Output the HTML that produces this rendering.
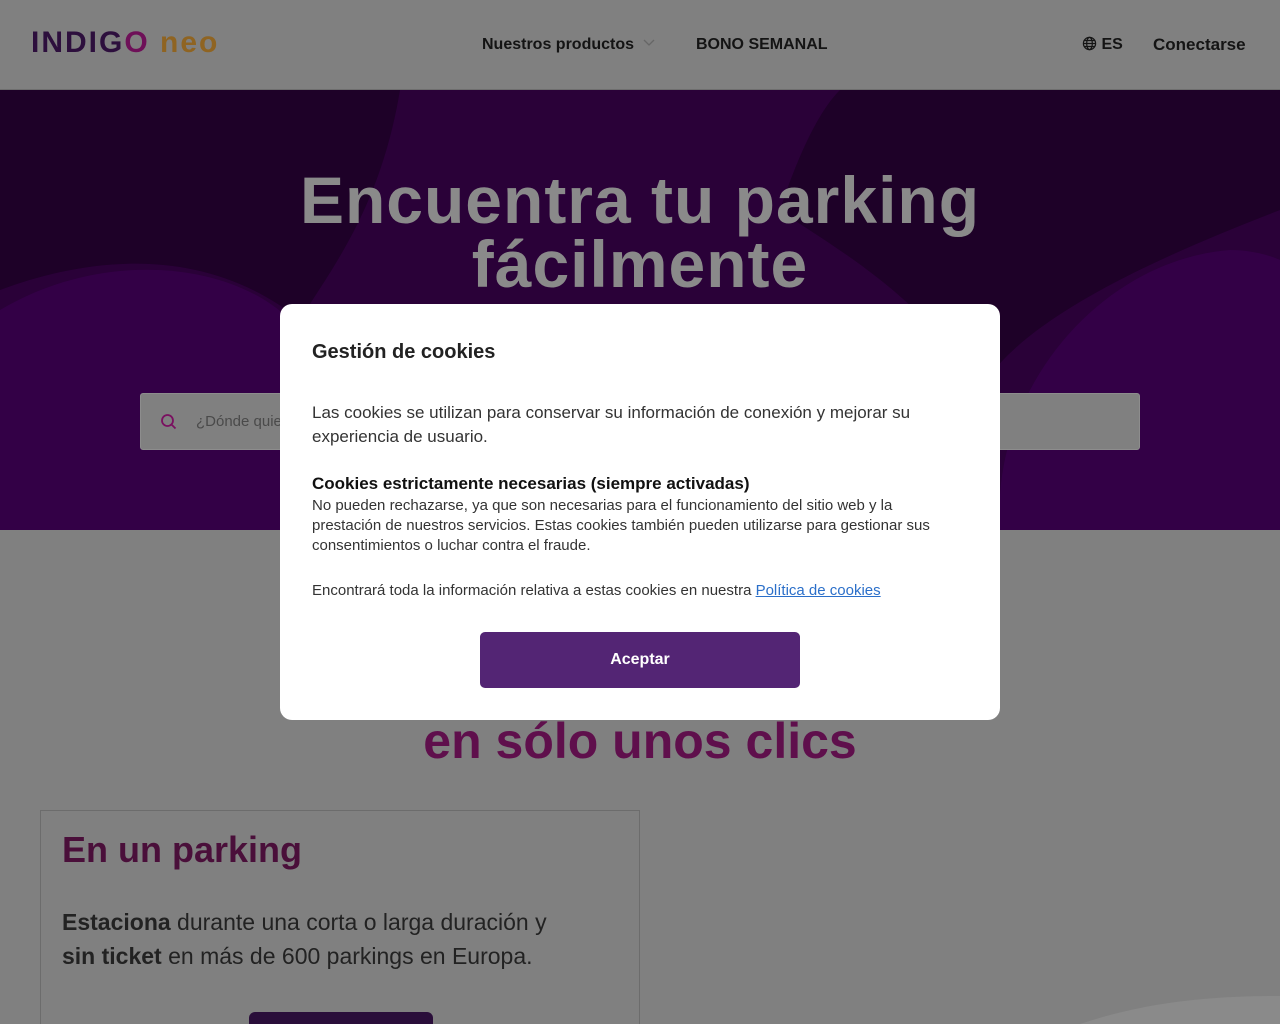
<!DOCTYPE html>
<html><head><meta charset="utf-8"><style>
*{box-sizing:border-box;margin:0;padding:0}
html,body{width:1280px;height:1024px;overflow:hidden}
body{background:#808080;font-family:"Liberation Sans",sans-serif;position:relative}
.hdr{height:90px;background:#808080;border-bottom:1px solid #6e6e6e;position:relative}
.logo{position:absolute;left:31px;top:27px;font-size:30px;font-weight:bold;letter-spacing:2px;line-height:32px}
.nav{position:absolute;top:35px;font-size:16px;line-height:20px;font-weight:bold;color:#141414;white-space:nowrap}
.hero{position:absolute;top:90px;left:0;width:1280px;height:440px;background:#2a0138;overflow:hidden}
.h1{position:absolute;top:168px;left:0;width:1280px;text-align:center;font-size:66px;line-height:64px;font-weight:bold;color:#8a8a8a;letter-spacing:1px}
.search{position:absolute;left:140px;top:393px;width:1000px;height:57px;background:#808080;border-radius:3px;border:1px solid #8d8d8d}
.sub{position:absolute;top:712px;width:1280px;text-align:center;font-size:50px;font-weight:bold;color:#5f0f4c}
.card{position:absolute;left:40px;top:810px;width:600px;height:214px;border:1px solid #6c6c6c;border-bottom:none}
.card h2{position:absolute;left:21px;top:18px;font-size:36px;color:#4a0f3a}
.card p{position:absolute;left:21px;top:94px;font-size:23px;line-height:34px;color:#222;width:520px}
.cbtn{position:absolute;left:208px;top:201px;width:184px;height:13px;background:#2a0e3a;border-radius:6px 6px 0 0}
.modal{position:absolute;left:280px;top:304px;width:720px;height:416px;background:#fff;border-radius:12px;color:#222}
.modal h3{position:absolute;left:32px;top:37px;font-size:20px;font-weight:bold;color:#222}
.t1{position:absolute;left:32px;top:97px;width:660px;font-size:17px;line-height:24px;color:#333}
.t2{position:absolute;left:32px;top:170px;font-size:17px;font-weight:bold;color:#111}
.t3{position:absolute;left:32px;top:192px;width:640px;font-size:15px;line-height:20px;color:#333}
.t4{position:absolute;left:32px;top:278px;font-size:15px;color:#333}
.t4 a{color:#2b6fc9;text-decoration:underline}
.acc{position:absolute;left:200px;top:328px;width:320px;height:56px;background:#532574;border-radius:5px;color:#fff;font-weight:bold;font-size:16px;text-align:center;line-height:56px}
</style></head><body>
<div class="hdr">
 <div class="logo"><span style="color:#2d0f3d">INDIG</span><span style="color:#6e1058">O</span> <span style="color:#8f6422">neo</span></div>
 <div class="nav" style="left:482px">Nuestros productos <svg width="12" height="8" viewBox="0 0 12 8" style="margin-left:5px;vertical-align:2px"><path d="M1 1l5 5 5-5" fill="none" stroke="#666" stroke-width="1.3"/></svg></div>
 <div class="nav" style="left:696px">BONO SEMANAL</div>
 <div class="nav" style="left:1082px"><svg width="15" height="15" viewBox="0 0 16 16" style="vertical-align:-2px"><g fill="none" stroke="#141414" stroke-width="1.3"><circle cx="8" cy="8" r="6.5"/><ellipse cx="8" cy="8" rx="3" ry="6.5"/><path d="M1.5 8h13M2.5 4.8h11M2.5 11.2h11"/></g></svg> ES</div>
 <div class="nav" style="left:1153px;font-size:17px">Conectarse</div>
</div>
<div class="hero">
 <svg width="1280" height="440" style="position:absolute;left:0;top:0">
  <path d="M0 0 H400 C380 120 330 180 300 230 C200 150 80 170 0 200 Z" fill="#1e0128"/>
  <path d="M840 0 H1280 V120 C1150 170 1020 230 980 300 C920 200 820 150 780 120 C800 60 820 20 840 0Z" fill="#1e0128"/>
  <path d="M1000 440 C990 300 1100 170 1230 160 C1260 160 1280 170 1280 170 V440Z" fill="#330046"/>
  <path d="M0 440 V220 C100 160 230 170 290 230 C330 290 300 380 280 440Z" fill="#330046"/>
 </svg>
</div>
<div class="h1">Encuentra tu parking<br>fácilmente</div>
<div class="search"><svg width="18" height="18" viewBox="0 0 18 18" style="position:absolute;left:19px;top:19px"><circle cx="7.5" cy="7.5" r="5.5" fill="none" stroke="#7a1060" stroke-width="1.8"/><path d="M11.5 11.5l4 4" stroke="#7a1060" stroke-width="1.8"/></svg><span style="position:absolute;left:55px;top:19px;font-size:15px;color:#4a4a4a">¿Dónde quie</span></div>
<div class="sub">en sólo unos clics</div>
<div class="card"><h2>En un parking</h2><p><b>Estaciona</b> durante una corta o larga duración y <b>sin ticket</b> en más de 600 parkings en Europa.</p><div class="cbtn"></div></div>
<svg width="200" height="30" style="position:absolute;left:1080px;top:994px"><path d="M0 30 C60 10 120 2 200 2 V30Z" fill="#8a8a8a"/></svg>
<div class="modal">
 <h3>Gestión de cookies</h3>
 <div class="t1">Las cookies se utilizan para conservar su información de conexión y mejorar su experiencia de usuario.</div>
 <div class="t2">Cookies estrictamente necesarias (siempre activadas)</div>
 <div class="t3">No pueden rechazarse, ya que son necesarias para el funcionamiento del sitio web y la prestación de nuestros servicios. Estas cookies también pueden utilizarse para gestionar sus consentimientos o luchar contra el fraude.</div>
 <div class="t4">Encontrará toda la información relativa a estas cookies en nuestra <a>Política de cookies</a></div>
 <div class="acc">Aceptar</div>
</div>
</body></html>
